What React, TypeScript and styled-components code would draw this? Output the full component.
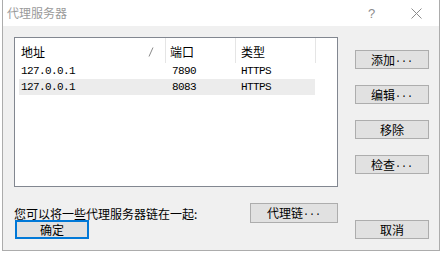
import * as React from 'react';
import styled, { createGlobalStyle } from 'styled-components';

const UI_FONT = '"Noto Sans CJK SC", "Noto Sans", sans-serif';
const DATA_FONT = '"Liberation Mono", "Noto Sans CJK SC", monospace';

const GlobalStyle = createGlobalStyle`
  html, body {
    margin: 0;
    padding: 0;
    background: #ffffff;
  }
  body {
    font-family: ${UI_FONT};
    font-size: 12px;
  }
`;

const Window = styled.div`
  margin-left: 2px;
  width: 438px;
  height: 251px;
  box-sizing: border-box;
  border: 1px solid #acacac;
  border-top: none;
  background: #f0f0f0;
  display: flex;
  flex-direction: column;
`;

const TitleBar = styled.div`
  height: 26px;
  flex-shrink: 0;
  background: #ffffff;
  display: flex;
  align-items: center;
  padding-left: 4px;
`;

const Title = styled.div`
  flex: 1;
  color: #9a9a9a;
  font-size: 12px;
  line-height: 14px;
  padding-bottom: 1px;
`;

const CaptionButton = styled.div`
  width: 45px;
  height: 26px;
  display: flex;
  align-items: center;
  justify-content: center;
  color: #8c8c8c;
  font-family: "Liberation Sans", sans-serif;
  font-size: 13px;
`;

const Body = styled.div`
  flex: 1;
  padding: 11px 10px 0 11px;
  display: flex;
  flex-direction: column;
`;

const MainRow = styled.div`
  display: flex;
`;

const ListBox = styled.div`
  width: 324px;
  height: 150px;
  box-sizing: border-box;
  border: 1px solid #828790;
  background: #ffffff;
`;

const HeaderRow = styled.div`
  height: 25px;
  display: flex;
`;

const HeaderCell = styled.div<{ $w: number; $pad: number }>`
  width: ${(p) => p.$w}px;
  box-sizing: border-box;
  padding-left: ${(p) => p.$pad}px;
  padding-top: 2px;
  border-right: 1px solid #e5e5e5;
  display: flex;
  align-items: center;
  justify-content: space-between;
  color: #000;
  font-size: 12px;
  line-height: 14px;
`;

const SortMark = styled.svg`
  margin-right: 11px;
`;

const DataRow = styled.div<{ $alt?: boolean }>`
  margin-left: 4px;
  width: 296px;
  height: 16px;
  display: flex;
  align-items: center;
  background: ${(p) => (p.$alt ? '#ececec' : 'transparent')};
`;

const DataCell = styled.div<{ $w: number; $pad: number }>`
  width: ${(p) => p.$w}px;
  box-sizing: border-box;
  padding-left: ${(p) => p.$pad}px;
  font-family: ${DATA_FONT};
  font-size: 11px;
  letter-spacing: -0.6px;
  color: #000;
`;

const SideButtons = styled.div`
  margin-left: 17px;
  padding-top: 13px;
  display: flex;
  flex-direction: column;
  gap: 16px;
`;

const Button = styled.div<{ $w?: number; $h?: number; $default?: boolean }>`
  width: ${(p) => p.$w ?? 74}px;
  height: ${(p) => p.$h ?? 19}px;
  box-sizing: border-box;
  border: ${(p) => (p.$default ? '2px solid #0078d7' : '1px solid #adadad')};
  background: #e1e1e1;
  display: flex;
  align-items: center;
  justify-content: center;
  font-size: 12px;
  line-height: 14px;
  color: #000;
`;

const Dots = styled.span`
  font-family: ${DATA_FONT};
  font-size: 10px;
`;

const ChainRow = styled.div`
  margin-top: 16px;
  width: 324px;
  height: 20px;
  display: flex;
  align-items: center;
  justify-content: space-between;
`;

const Hint = styled.div`
  font-size: 12px;
  line-height: 14px;
  color: #000;
  padding-top: 2px;
`;

const Footer = styled.div`
  margin-top: -3px;
  padding-left: 1px;
  display: flex;
  justify-content: space-between;
`;

const rows = [
  { host: '127.0.0.1', port: '7890', type: 'HTTPS' },
  { host: '127.0.0.1', port: '8083', type: 'HTTPS' },
];

function Label({ text, dots }: { text: string; dots?: boolean }): JSX.Element {
  return (
    <>
      {text}
      {dots && <Dots>...</Dots>}
    </>
  );
}

export default function App(): JSX.Element {
  return (
    <>
      <GlobalStyle />
      <Window>
        <TitleBar>
          <Title>代理服务器</Title>
          <CaptionButton>?</CaptionButton>
          <CaptionButton>
            <svg width="11" height="11" viewBox="0 0 11 11">
              <path d="M0.5 0.5 L10.5 10.5 M10.5 0.5 L0.5 10.5" stroke="#8c8c8c" strokeWidth="1" />
            </svg>
          </CaptionButton>
        </TitleBar>
        <Body>
          <MainRow>
            <ListBox>
              <HeaderRow>
                <HeaderCell $w={151} $pad={6}>
                  地址
                  <SortMark width="6" height="10" viewBox="0 0 6 10">
                    <path d="M5 0.5 L1 9.5" stroke="#8a8a8a" strokeWidth="1" />
                  </SortMark>
                </HeaderCell>
                <HeaderCell $w={70} $pad={4}>端口</HeaderCell>
                <HeaderCell $w={80} $pad={5}>类型</HeaderCell>
              </HeaderRow>
              {rows.map((r, i) => (
                <DataRow key={i} $alt={i % 2 === 1}>
                  <DataCell $w={145} $pad={2}>{r.host}</DataCell>
                  <DataCell $w={70} $pad={8}>{r.port}</DataCell>
                  <DataCell $w={80} $pad={7}>{r.type}</DataCell>
                </DataRow>
              ))}
            </ListBox>
            <SideButtons>
              <Button><Label text="添加" dots /></Button>
              <Button><Label text="编辑" dots /></Button>
              <Button><Label text="移除" /></Button>
              <Button><Label text="检查" dots /></Button>
            </SideButtons>
          </MainRow>
          <ChainRow>
            <Hint>您可以将一些代理服务器链在一起:</Hint>
            <Button $w={88} $h={20}><Label text="代理链" dots /></Button>
          </ChainRow>
          <Footer>
            <Button $default>确定</Button>
            <Button>取消</Button>
          </Footer>
        </Body>
      </Window>
    </>
  );
}
